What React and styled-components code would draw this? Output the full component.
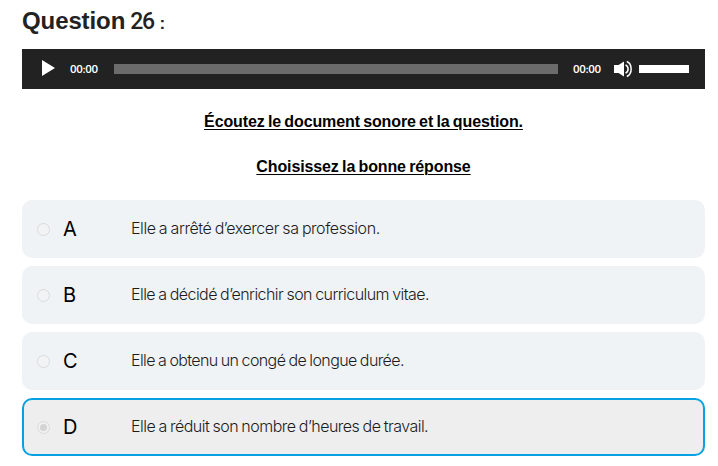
import React from "react";
import styled, { createGlobalStyle } from "styled-components";

const GlobalStyle = createGlobalStyle`
  * { box-sizing: border-box; }
  body { margin: 0; background: #fff; overflow: hidden; font-family: "Liberation Sans", Arial, sans-serif; }
`;

const Page = styled.main`
  width: 718px;
  height: 466px;
  padding: 0 13px 0 22px;
  display: flex;
  flex-direction: column;
`;

const Title = styled.h1`
  display: flex;
  align-items: baseline;
  margin: 0;
  height: 49px;
  padding-top: 7px;
  font-size: 24px;
  line-height: 28px;
  font-weight: 700;
  letter-spacing: -0.1px;
  color: #222;
`;

const TitleNumber = styled.span`
  margin-left: 5px;
  font-family: Roboto, sans-serif;
  font-weight: 500;
  font-size: 23px;
  letter-spacing: -1.4px;
`;

const TitleColon = styled.span`
  margin-left: 6px;
  font-size: 17px;
`;

const Player = styled.div`
  display: flex;
  align-items: center;
  height: 40px;
  padding: 0 16px 0 20px;
  background: #222;
`;

const PlayIcon = styled.svg`
  width: 14px;
  height: 16px;
  margin-right: 14px;
  margin-top: -2px;
`;

const Time = styled.span`
  width: 30px;
  font-family: Inter, sans-serif;
  font-size: 10px;
  font-weight: 600;
  line-height: 14px;
  letter-spacing: -0.4px;
  color: #fff;
`;

const Rail = styled.div`
  width: 444px;
  height: 10px;
  margin: 0 15px 0 14px;
  background: #6b6b6b;
`;

const VolumeIcon = styled.svg`
  width: 19px;
  height: 18px;
  margin: 0 6px 0 11px;
`;

const Volume = styled.div`
  width: 50px;
  height: 8px;
  background: #fff;
`;

const Instruction = styled.p`
  margin: ${(p) => p.$top}px 0 0;
  text-align: center;
  font-size: 16px;
  line-height: 20px;
  font-weight: 700;
  letter-spacing: -0.12px;
  word-spacing: -1px;
  color: #000;
  text-decoration: underline;
  text-decoration-thickness: 1px;
  text-underline-offset: 2px;
`;

const Options = styled.div`
  display: flex;
  flex-direction: column;
  gap: 8px;
  margin-top: 23px;
`;

const Option = styled.label`
  display: flex;
  align-items: center;
  height: 58px;
  padding-left: 13px;
  border-radius: 10px;
  border: 2px solid ${(p) => (p.$selected ? "#06a2e3" : "#eff3f6")};
  background: ${(p) => (p.$selected ? "#eee" : "#eff3f6")};
`;

const Radio = styled.span`
  display: grid;
  place-items: center;
  width: 13px;
  height: 13px;
  margin-top: 1px;
  border: 1px solid #dadbdb;
  border-radius: 50%;
  background: ${(p) => (p.$selected ? "#f0f0f0" : "#f1f3f5")};

  &::after {
    content: "";
    width: 7px;
    height: 7px;
    border-radius: 50%;
    background: ${(p) => (p.$selected ? "#d4d4d4" : "transparent")};
  }
`;

const Letter = styled.span`
  width: 68px;
  margin-left: 13px;
  font-family: Inter, sans-serif;
  font-size: 20px;
  line-height: 24px;
  color: #000;
`;

const Answer = styled.span`
  padding-bottom: 2px;
  font-family: Inter, sans-serif;
  font-weight: 300;
  font-size: 16px;
  line-height: 24px;
  letter-spacing: ${(p) => p.$spacing}px;
  word-spacing: -0.7px;
  color: #1c1c1c;
  white-space: nowrap;
`;

const options = [
  { letter: "A", text: "Elle a arrêté d’exercer sa profession.", spacing: -0.44 },
  { letter: "B", text: "Elle a décidé d’enrichir son curriculum vitae.", spacing: -0.56 },
  { letter: "C", text: "Elle a obtenu un congé de longue durée.", spacing: -0.61 },
  { letter: "D", text: "Elle a réduit son nombre d’heures de travail.", spacing: -0.52, selected: true },
];

export default function App() {
  return (
    <Page>
      <GlobalStyle />
      <Title>
        Question<TitleNumber>26</TitleNumber><TitleColon>:</TitleColon>
      </Title>
      <Player>
        <PlayIcon viewBox="0 0 14 16"><path d="M0 0 L13 8 L0 16Z" fill="#fff" /></PlayIcon>
        <Time>00:00</Time>
        <Rail />
        <Time>00:00</Time>
        <VolumeIcon viewBox="0 0 19 18">
          <path d="M0 5H4.5L10 1.5V16.5L4.5 13H0Z" fill="#fff" />
          <path d="M11.5 4.8C15 6.5 15 11.5 11.5 13.2M12.8 1.5C18.6 4 18.6 14 12.8 16.5" fill="none" stroke="#fff" strokeWidth="1.5" />
        </VolumeIcon>
        <Volume />
      </Player>
      <Instruction $top={23}>Écoutez le document sonore et la question.</Instruction>
      <Instruction $top={25}>Choisissez la bonne réponse</Instruction>
      <Options>
        {options.map((o) => (
          <Option key={o.letter} $selected={o.selected}>
            <Radio $selected={o.selected} />
            <Letter>{o.letter}</Letter>
            <Answer $spacing={o.spacing}>{o.text}</Answer>
          </Option>
        ))}
      </Options>
    </Page>
  );
}
